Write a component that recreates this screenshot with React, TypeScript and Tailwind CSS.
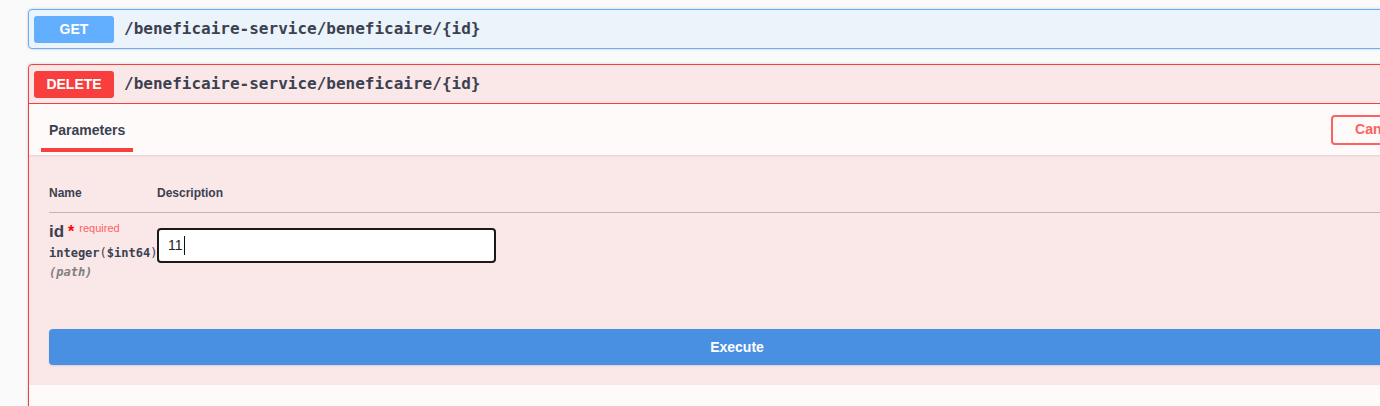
export default function App() {
  const sans = "font-['Liberation_Sans',Arial,sans-serif]";
  const mono = "font-['DejaVu_Sans_Mono',monospace]";

  return (
    <div className={`h-[406px] w-[1380px] overflow-hidden bg-[#fafafa] ${sans} text-[#3b4151]`}>
      <div className="ml-[28px] w-[1418px] pt-[9px]">
        {/* GET */}
        <div className="rounded-[4px] border border-[#61affe] bg-[#ebf3fb] shadow-[0_0_3px_rgba(0,0,0,0.19)]">
          <div className="flex h-[38px] items-center px-[5px]">
            <span className="flex h-[27px] w-[80px] items-center justify-center rounded-[3px] bg-[#61affe] text-[14px] font-bold text-white">
              GET
            </span>
            <span className={`ml-[10px] text-[16px] font-bold ${mono} text-[#3b4151]`}>
              /beneficaire-service/beneficaire/{"{id}"}
            </span>
          </div>
        </div>

        {/* DELETE */}
        <div className="mt-[15px] rounded-[4px] border border-[#f93e3e] bg-[#fae7e7] shadow-[0_0_3px_rgba(0,0,0,0.19)]">
          <div className="flex h-[39px] items-center border-b border-[#f93e3e] px-[5px]">
            <span className="flex h-[27px] w-[80px] items-center justify-center rounded-[3px] bg-[#f93e3e] text-[14px] font-bold text-white">
              DELETE
            </span>
            <span className={`ml-[10px] text-[16px] font-bold ${mono} text-[#3b4151]`}>
              /beneficaire-service/beneficaire/{"{id}"}
            </span>
          </div>

          {/* section header */}
          <div className="flex h-[51px] items-center justify-between bg-[#fefafa] pl-[12px] pr-[20px] shadow-[0_1px_2px_rgba(0,0,0,0.1)]">
            <div className="relative flex h-[51px] items-center px-[8px] pt-[1px]">
              <span className="text-[14px] font-bold text-[#3b4151]">Parameters</span>
              <span className="absolute bottom-[3px] left-0 right-0 h-[4px] bg-[#f93e3e]" />
            </div>
            <button className="h-[30px] w-[94px] rounded-[4px] border-2 border-[#ff6060] bg-transparent text-[14px] font-bold text-[#ff6060]">
              Cancel
            </button>
          </div>

          {/* parameters table */}
          <div className="px-[20px] pt-[20px]">
            <div className="flex h-[38px] items-end border-b border-[#3b4151]/30 pb-[10px] text-[12px] font-bold">
              <span className="w-[108px]">Name</span>
              <span>Description</span>
            </div>
            <div className="flex h-[116px] pt-[9px]">
              <div className="w-[108px] shrink-0">
                <div className="flex items-start">
                  <span className="text-[17px] font-bold leading-[20px]">id</span>
                  <span className="ml-[4px] mt-[1px] text-[16px] font-bold leading-[18px] text-[#ff0000]">*</span>
                  <span className="ml-[5px] text-[11px] leading-[12px] text-[#ff6060]">required</span>
                </div>
                <div className={`mt-[1px] ${mono} whitespace-nowrap text-[12px] font-bold leading-[20px]`}>
                  integer<span className="font-normal">(</span>$int64<span className="font-normal">)</span>
                </div>
                <div className={`${mono} text-[12px] font-bold italic leading-[18px] text-[#808080]`}>
                  (path)
                </div>
              </div>
              <div className="mt-[6px] flex h-[35px] w-[339px] items-center rounded-[4px] border-2 border-[#1a1a1a] bg-white pl-[9px] text-[14px] text-[#222]">
                11<span className="ml-[1px] h-[19px] w-[1px] bg-[#111]" />
              </div>
            </div>
          </div>

          {/* execute */}
          <div className="px-[20px] pb-[20px]">
            <button className="h-[36px] w-full rounded-[4px] bg-[#4990e2] text-[14px] font-bold text-white shadow-[0_1px_2px_rgba(0,0,0,0.1)]">
              Execute
            </button>
          </div>

          {/* responses header */}
          <div className="flex h-[50px] items-start bg-[#fefafa] px-[20px] pt-[17px] shadow-[0_1px_2px_rgba(0,0,0,0.1)]">
            <span className="text-[14px] font-bold leading-[20px]">Responses</span>
          </div>
        </div>
      </div>
    </div>
  );
}
